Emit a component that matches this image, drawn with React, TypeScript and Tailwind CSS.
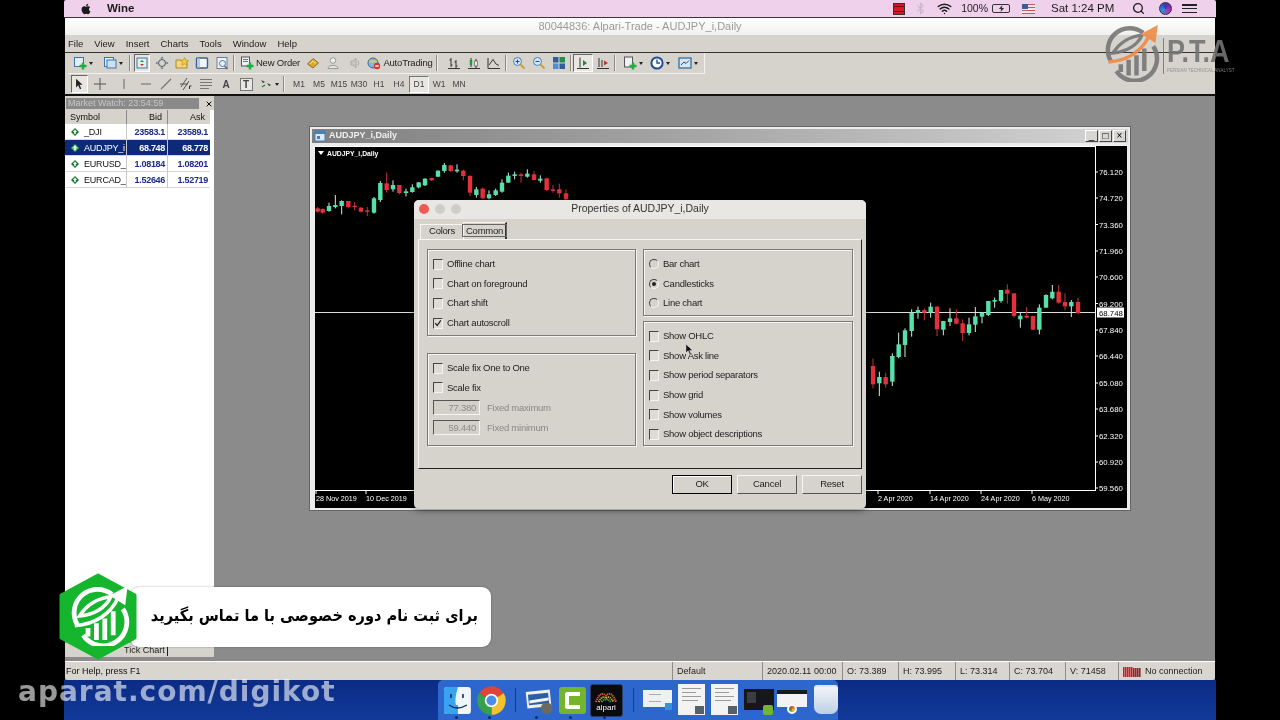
import { Search, Wifi, Bluetooth, X } from 'lucide-react';
import { FaApple } from 'react-icons/fa';
import type { ReactNode } from 'react';

// [x, wickTop, bodyTop, bodyBottom, wickBottom, up]
type Candle = [number, number, number, number, number, number];

// read off the reference at 3x, hence the offsets in toPage
const leftCandles: Candle[] = [
  [38,258,262,272,275,0],[53,262,264,275,278,0],[72,245,255,270,272,1],[91,222,252,258,262,1],[110,238,240,255,280,1],
  [130,240,240,258,262,0],[149,243,254,258,268,0],[168,258,260,272,275,0],[187,258,268,272,285,0],[207,228,232,275,278,1],
  [226,180,186,237,243,1],[245,155,187,207,215,0],[264,178,192,205,212,1],[283,192,192,216,220,0],[303,203,211,216,226,1],
  [322,190,199,213,215,1],[341,183,184,199,202,1],[360,172,173,193,195,1],[380,170,171,178,180,0],[399,148,149,167,168,1],
  [418,126,132,150,155,1],[437,132,133,150,153,0],[456,130,146,151,155,1],[475,146,149,165,178,0],[495,162,165,215,225,0],
  [514,198,205,222,230,1],[533,200,203,232,235,0],[552,208,220,232,235,1],[572,203,208,222,225,1],[591,175,185,212,215,1],
  [610,155,164,185,185,1],[629,152,160,165,175,1],[648,155,160,165,185,0],[667,145,158,167,170,1],[687,150,160,177,178,0],
  [706,163,173,179,185,1],[725,170,172,207,210,0],[744,192,205,208,215,0],[763,188,205,217,230,0],[783,205,217,235,240,0],
];

const rightCandles: Candle[] = [
  [39,712,735,790,802,0],[58,752,768,787,825,1],[77,755,768,790,800,0],[97,697,705,782,795,1],[116,635,670,708,712,1],
  [135,622,628,672,708,1],[155,565,575,630,647,1],[174,557,567,576,593,1],[193,562,567,575,598,0],[212,545,557,575,590,1],
  [231,555,557,625,645,0],[250,600,600,626,643,1],[270,562,592,603,615,1],[289,565,592,608,610,0],[308,595,607,636,660,0],
  [327,590,610,636,643,1],[346,558,586,611,633,1],[366,575,575,587,607,1],[385,540,540,582,585,1],[404,530,537,542,560,1],
  [423,507,507,540,545,1],[442,490,506,518,548,0],[462,517,517,585,590,0],[481,575,584,595,620,1],[500,558,584,590,592,0],
  [519,585,585,626,627,0],[538,550,560,626,640,1],[558,520,522,560,560,1],[577,492,512,532,535,1],[596,492,512,545,548,0],
  [615,517,543,556,568,0],[634,537,543,556,588,1],[654,530,543,577,578,0],
];

const priceLabels: [string, number][] = [
  ['76.120', 171], ['74.720', 197], ['73.360', 223.5], ['71.960', 250], ['70.600', 276], ['69.200', 302.5],
  ['67.840', 329], ['66.440', 355], ['65.080', 382], ['63.680', 408], ['62.320', 435], ['60.920', 461], ['59.560', 487],
];

const dateLabels: [string, number][] = [
  ['28 Nov 2019', 316], ['10 Dec 2019', 366], ['2 Apr 2020', 878], ['14 Apr 2020', 930], ['24 Apr 2020', 981], ['6 May 2020', 1032],
];

const watchRows = [
  { symbol: '_DJI', bid: '23583.1', ask: '23589.1' },
  { symbol: 'AUDJPY_i', bid: '68.748', ask: '68.778', selected: true },
  { symbol: 'EURUSD_i', bid: '1.08184', ask: '1.08201' },
  { symbol: 'EURCAD_i', bid: '1.52646', ask: '1.52719' },
];

function CandleMarks({ data, ox, oy }: { data: Candle[]; ox: number; oy: number }) {
  return (
    <>
      {data.map(([x, wt, bt, bb, wb, up]) => {
        const cx = ox + x / 3;
        const color = up ? '#58e0aa' : '#e2303c';
        return (
          <g key={x}>
            <line x1={cx} x2={cx} y1={oy + wt / 3} y2={oy + wb / 3} stroke={up ? '#cfeee2' : '#c23040'} strokeWidth="1" />
            <rect x={cx - 2.2} y={oy + bt / 3} width="4.4" height={Math.max(1.5, (bb - bt) / 3)} fill={color} />
          </g>
        );
      })}
    </>
  );
}

function ChartCanvas() {
  return (
    <svg viewBox="315 145 812 362" className="block w-[812px] h-[362px] bg-black">
      <line x1="315" x2="1095" y1="145.5" y2="145.5" stroke="#fff" />
      <line x1="1095.5" x2="1095.5" y1="145" y2="490" stroke="#fff" />
      <line x1="315" x2="1096" y1="489.5" y2="489.5" stroke="#fff" />
      <line x1="315" x2="1095" y1="311.5" y2="311.5" stroke="#ddd" />
      <CandleMarks data={leftCandles} ox={305} oy={120} />
      <CandleMarks data={rightCandles} ox={860} oy={120} />
      <path d="M318 150 h6 l-3 4 z" fill="#fff" />
      <text x="327" y="154.5" fill="#fff" fontSize="6.8" fontFamily="Liberation Sans" fontWeight="700">AUDJPY_i,Daily</text>
      {priceLabels.map(([label, y]) => (
        <g key={label}>
          <line x1="1095" x2="1098" y1={y} y2={y} stroke="#fff" />
          <text x="1099" y={y + 3} fill="#fff" fontSize="7.8" fontFamily="Liberation Sans">{label}</text>
        </g>
      ))}
      <rect x="1097" y="306.5" width="27" height="10" fill="#fff" />
      <text x="1099" y="314.5" fill="#000" fontSize="7.8" fontFamily="Liberation Sans">68.748</text>
      {dateLabels.map(([label, x]) => (
        <g key={label}>
          <line x1={x} x2={x} y1="489" y2="493" stroke="#fff" />
          <text x={x} y="499.5" fill="#fff" fontSize="7.2" fontFamily="Liberation Sans">{label}</text>
        </g>
      ))}
    </svg>
  );
}

function Check({ checked }: { checked?: boolean }) {
  return (
    <span className="relative block w-[10px] h-[11px] shrink-0 border-[1.5px] border-t-[#444] border-l-[#444] border-r-[#f4f4f4] border-b-[#f4f4f4] bg-[#dedbd5]">
      {checked && (
        <svg viewBox="0 0 10 10" className="absolute inset-0 w-full h-full">
          <path d="M1.5 4.5 L4 7.5 L8.5 1" fill="none" stroke="#222" strokeWidth="1.6" />
        </svg>
      )}
    </span>
  );
}

function Radio({ checked }: { checked?: boolean }) {
  return (
    <span className="flex items-center justify-center w-[10px] h-[10px] shrink-0 rounded-full border-[1.5px] border-t-[#444] border-l-[#444] border-r-[#f4f4f4] border-b-[#f4f4f4]">
      {checked && <span className="block w-[4px] h-[4px] rounded-full bg-[#222]" />}
    </span>
  );
}

function Option({ label, control }: { label: string; control: ReactNode }) {
  return (
    <div className="flex items-center gap-[4px] h-[19.6px] text-[#222]">
      {control}
      <span>{label}</span>
    </div>
  );
}

function GroupBox({ className, children }: { className: string; children: ReactNode }) {
  return (
    <div className={`border border-[#7c7a75] shadow-[1px_1px_0_#f5f5f2,inset_1px_1px_0_#f5f5f2] pl-[5px] pt-[5px] ${className}`}>
      {children}
    </div>
  );
}

function FixedField({ value, label }: { value: string; label: string }) {
  return (
    <div className="flex items-center gap-[7px] h-[20px] text-[#8a8884]">
      <span className="block w-[47px] h-[15px] text-right pr-[3px] leading-[13px] border border-t-[#555] border-l-[#555] border-r-[#f4f4f4] border-b-[#f4f4f4] text-[#8e8c88] bg-[#d3d0ca]">
        {value}
      </span>
      <span>{label}</span>
    </div>
  );
}

function DialogButton({ label, primary }: { label: string; primary?: boolean }) {
  return (
    <button
      className={`w-[60px] h-[19px] flex items-center justify-center text-[#222] ${
        primary
          ? 'border-[1.5px] border-black shadow-[inset_1px_1px_0_#fff]'
          : 'border border-t-[#f5f5f2] border-l-[#f5f5f2] border-r-[#55534f] border-b-[#55534f]'
      }`}
    >
      {label}
    </button>
  );
}

function PropertiesDialog() {
  return (
    <div className="absolute left-[199px] top-[104px] w-[452px] h-[309px] rounded-[5px] bg-[#d6d3cc] shadow-[0_1px_6px_rgba(0,0,0,0.5)] overflow-hidden text-[9.5px] tracking-[-0.25px] font-['Liberation_Sans',sans-serif]">
      <div className="relative flex items-center h-[19px] px-[5px] gap-[6px] bg-[#e9e7e4]">
        <span className="block w-[10px] h-[10px] rounded-full bg-[#ef5a52]" />
        <span className="block w-[10px] h-[10px] rounded-full bg-[#cfcdc9]" />
        <span className="block w-[10px] h-[10px] rounded-full bg-[#cfcdc9]" />
        <span className="absolute inset-x-0 top-0 text-center text-[10.5px] tracking-normal leading-[17px] text-[#333]">Properties of AUDJPY_i,Daily</span>
      </div>
      <div className="flex items-end h-[20px] pl-[6px] pt-[3px]">
        <span className="flex items-center justify-center w-[43px] h-[15px] text-[#222] border-t border-l border-[#f5f5f2]">Colors</span>
        <span className="flex items-center justify-center w-[44px] h-[17px] text-[#222] border-t border-l border-[#f5f5f2] border-r-2 border-r-[#333]">
          <span className="border border-[#666] px-[3px] leading-[11px]">Common</span>
        </span>
      </div>
      <div className="mx-[4px] h-[230px] border-t border-l border-t-[#f5f5f2] border-l-[#f5f5f2] border-r-[1.5px] border-b-[1.5px] border-r-[#222] border-b-[#222] pl-[8px] pt-[9px] grid grid-cols-[209px_210px] gap-x-[7px]">
        <div className="flex flex-col gap-[17px]">
          <GroupBox className="h-[87px]">
            <Option label="Offline chart" control={<Check />} />
            <Option label="Chart on foreground" control={<Check />} />
            <Option label="Chart shift" control={<Check />} />
            <Option label="Chart autoscroll" control={<Check checked />} />
          </GroupBox>
          <GroupBox className="h-[93px]">
            <Option label="Scale fix One to One" control={<Check />} />
            <Option label="Scale fix" control={<Check />} />
            <FixedField value="77.380" label="Fixed maximum" />
            <FixedField value="59.440" label="Fixed minimum" />
          </GroupBox>
        </div>
        <div className="flex flex-col gap-[5px]">
          <GroupBox className="h-[67px]">
            <Option label="Bar chart" control={<Radio />} />
            <Option label="Candlesticks" control={<Radio checked />} />
            <Option label="Line chart" control={<Radio />} />
          </GroupBox>
          <GroupBox className="h-[125px]">
            <Option label="Show OHLC" control={<Check />} />
            <Option label="Show Ask line" control={<Check />} />
            <Option label="Show period separators" control={<Check />} />
            <Option label="Show grid" control={<Check />} />
            <Option label="Show volumes" control={<Check />} />
            <Option label="Show object descriptions" control={<Check />} />
          </GroupBox>
        </div>
      </div>
      <div className="flex justify-end gap-[5px] pr-[4px] pt-[6px]">
        <DialogButton label="OK" primary />
        <DialogButton label="Cancel" />
        <DialogButton label="Reset" />
      </div>
      {/* mouse pointer over the Show OHLC row */}
      <svg viewBox="0 0 10 14" className="absolute left-[271px] top-[143px] w-[9px] h-[13px]">
        <path d="M1 1 L1 11 L3.5 8.5 L5.5 13 L7 12.4 L5.2 8 L8.6 8 Z" fill="#111" stroke="#eee" strokeWidth="0.6" />
      </svg>
    </div>
  );
}

function ChartWindow() {
  return (
    <div className="absolute left-[94px] top-[30px] w-[822px] h-[385px] bg-[#ececec] border border-[#666] font-['Liberation_Sans',sans-serif]">
      <div className="flex items-center h-[14px] mt-[2px] mx-[2px] pl-[2px] pr-[2px] bg-gradient-to-r from-[#808080] via-[#a8a8a8] to-[#d4d4d4]">
        <svg viewBox="0 0 12 12" className="w-[12px] h-[12px]">
          <rect x="1" y="1" width="10" height="10" fill="#dfe9f5" stroke="#4a7fb5" />
          <rect x="1" y="1" width="10" height="3" fill="#4a7fb5" />
          <rect x="3" y="6" width="3" height="3" fill="#4a7fb5" />
        </svg>
        <span className="ml-[3px] text-[9px] font-bold text-[#eef0f2] flex-1">AUDJPY_i,Daily</span>
        {['_', '□', '×'].map((glyph) => (
          <span
            key={glyph}
            className="flex items-center justify-center w-[13px] h-[12px] ml-[1px] bg-[#d8d6d0] border border-t-white border-l-white border-r-[#444] border-b-[#444] text-[10px] leading-none text-black"
          >
            {glyph}
          </span>
        ))}
      </div>
      <div className="ml-[5px] mt-[3px]">
        <ChartCanvas />
      </div>
    </div>
  );
}

function WatchIcon({ light }: { light?: boolean }) {
  return (
    <svg viewBox="0 0 10 10" className="w-[8px] h-[8px] shrink-0">
      <path d="M5 0 L10 5 L5 10 L0 5 Z" fill={light ? '#4fc06a' : '#157a30'} />
      <path d="M5 2 L7.5 5 H6 V7.5 H4 V5 H2.5 Z" fill="#fff" />
    </svg>
  );
}

function MarketWatch() {
  return (
    <div className="flex flex-col w-[149px] shrink-0 bg-white text-[9px] font-['Liberation_Sans',sans-serif]">
      <div className="flex items-center h-[14px] pt-[2px] pl-[1px] bg-[#d6d3cc]">
        <div className="w-[133px] h-[11px] leading-[11px] pl-[2px] text-[#c8c8c8] bg-[#8a8a8a]">Market Watch: 23:54:59</div>
        <X className="w-[8px] h-[8px] ml-[6px] text-black" strokeWidth={3} />
      </div>
      <div className="grid grid-cols-[61px_41px_42px] w-[145px] h-[14px] pl-[1px] bg-[#d6d3cc] text-[#111]">
        <span className="pl-[4px] border-r border-[#8a8a8a] leading-[14px]">Symbol</span>
        <span className="pr-[5px] text-right border-r border-[#8a8a8a] leading-[14px]">Bid</span>
        <span className="pr-[5px] text-right leading-[14px]">Ask</span>
      </div>
      {watchRows.map((row) => (
        <div
          key={row.symbol}
          className={`grid grid-cols-[61px_41px_42px] w-[145px] h-[16px] leading-[16px] pl-[1px] border-b border-[#d8d8d8] ${
            row.selected ? 'bg-[#0c2a78] text-white' : 'text-[#111]'
          }`}
        >
          <span className="flex items-center gap-[5px] pl-[5px] border-r border-[#c8c8c8] overflow-hidden whitespace-nowrap tracking-[-0.2px]">
            <WatchIcon light={row.selected} />
            {row.symbol}
          </span>
          <span className={`pr-[2px] text-right font-bold tracking-[-0.3px] border-r border-[#c8c8c8] ${row.selected ? '' : 'text-[#1c2b8c]'}`}>{row.bid}</span>
          <span className={`pr-[2px] text-right font-bold tracking-[-0.3px] ${row.selected ? '' : 'text-[#1c2b8c]'}`}>{row.ask}</span>
        </div>
      ))}
      <div className="flex-1" />
      <div className="flex items-start h-[15px] bg-[#d6d3cc] border-t border-[#aaa]">
        <span className="ml-[50px] mt-[1px] leading-[12px] pr-[2px] border-r border-[#222] text-[#222]">
          <span className="ml-[9px]">Tick Chart</span>
        </span>
      </div>
    </div>
  );
}

function Tool({ className = 'w-[20px]', pressed, children }: { className?: string; pressed?: boolean; children: ReactNode }) {
  return (
    <div
      className={`flex items-center justify-center gap-[2px] h-[18px] shrink-0 whitespace-nowrap text-[9.5px] tracking-[-0.2px] text-[#222] ${className} ${
        pressed ? 'bg-[#e8e6e1] border border-t-[#666] border-l-[#666] border-r-white border-b-white' : ''
      }`}
    >
      {children}
    </div>
  );
}

function Sep() {
  return <span className="block w-[2px] h-[16px] mx-[1px] shrink-0 border-l border-[#8a8883] bg-white/60" />;
}

function Caret() {
  return <span className="block w-0 h-0 border-x-[2.5px] border-x-transparent border-t-[3px] border-t-[#222]" />;
}

function Ico({ children }: { children: ReactNode }) {
  return (
    <svg viewBox="0 0 14 14" className="w-[14px] h-[14px] shrink-0" fill="none">
      {children}
    </svg>
  );
}

const GreenPlus = () => <path d="M10 6.5 v7 M6.5 10 h7" stroke="#1fae3a" strokeWidth="2.4" />;
const Page = () => <rect x="1.5" y="1.5" width="9" height="9" fill="#e3edf7" stroke="#3f76a8" />;
const BlackStroke = { stroke: '#333', strokeWidth: 1 };

function MainToolbar() {
  return (
    <div className="flex items-center h-[22px] pl-[3px] border-t border-[#333] bg-[#d6d3cc]">
      <div className="flex items-center h-[21px] pr-[2px] border-b-[1.5px] border-r-[1.5px] border-[#f2f2ef]">
        <Tool className="w-[30px]"><Ico><Page /><GreenPlus /></Ico><Caret /></Tool>
        <Tool className="w-[30px]"><Ico><Page /><rect x="4" y="4" width="9" height="8" fill="#cfe0f0" stroke="#3f76a8" /></Ico><Caret /></Tool>
        <Sep />
        <Tool pressed className="w-[16px] mx-[2px]"><Ico><rect x="2" y="2" width="10" height="10" fill="#dff0ea" stroke="#3f76a8" /><path d="M5 6 l2 -2 l2 2 z" fill="#1a9a3a" /><path d="M5 8 l2 2 l2 -2 z" fill="#c73030" /></Ico></Tool>
        <Tool><Ico><circle cx="7" cy="7" r="3.5" stroke="#555" /><path d="M7 0.5 l1.5 2 h-3 z M7 13.5 l1.5 -2 h-3 z M0.5 7 l2 -1.5 v3 z M13.5 7 l-2 -1.5 v3 z" fill="#3f76a8" /></Ico></Tool>
        <Tool><Ico><path d="M1 4 h5 l1 1 h5 v7 h-11 z" fill="#f2d77a" stroke="#a98a2e" /><path d="M9.5 1.5 l1.2 2.6 l2.8 .3 l-2 2 l.6 2.8 l-2.6 -1.4 l-2.6 1.4 l.6 -2.8 l-2 -2 l2.8 -.3 z" fill="#f5c93c" stroke="#a98a2e" strokeWidth=".6" /></Ico></Tool>
        <Tool><Ico><rect x="1.5" y="2" width="11" height="10" rx="1" fill="#f2f4f6" stroke="#3f5f86" strokeWidth="1.4" /><rect x="2" y="2.5" width="3" height="9" fill="#b9cbe0" /></Ico></Tool>
        <Tool><Ico><rect x="2" y="1.5" width="10" height="11" fill="#eef2f6" stroke="#6a7f98" /><circle cx="7.5" cy="7.5" r="3" stroke="#3f76a8" /><path d="M9.5 10 l3 3" stroke="#666" strokeWidth="1.4" /></Ico></Tool>
        <Sep />
        <Tool className="w-[64px] ml-[2px]"><Ico><rect x="1.5" y="1" width="8" height="9" fill="#eef2f6" stroke="#555" /><path d="M3 3.5 h5 M3 5.5 h5" stroke="#777" /><GreenPlus /></Ico><span>New Order</span></Tool>
        <Tool className="w-[20px] ml-[1px]"><Ico><path d="M1.5 8 L7 2.5 L12.5 7 L7 12 Z" fill="#d9a92c" stroke="#7a5d14" strokeWidth=".8" /><path d="M4 8 L7 5 L10 7.5" stroke="#f6e38a" /></Ico></Tool>
        <Tool><Ico><circle cx="7" cy="4.5" r="2.8" fill="#eef0f2" stroke="#999" /><path d="M2 12.5 c0 -4 10 -4 10 0 z" fill="#e6e8ea" stroke="#999" /></Ico></Tool>
        <Tool className="w-[20px] ml-[2px]"><Ico><path d="M3 5 h2 l3 -3 v10 l-3 -3 h-2 z" fill="#c9c7c2" stroke="#aaa" /><path d="M10 4.5 q1.5 2.5 0 5" stroke="#aaa" /></Ico></Tool>
        <Tool className="w-[70px]"><Ico><circle cx="6" cy="7" r="5" fill="#7eb6e6" stroke="#2f6aa0" /><path d="M2 4.5 h8 v2 h-8 z" fill="#f0c93c" /><circle cx="10" cy="10" r="3.2" fill="#d8362a" /><rect x="8.3" y="9.3" width="3.4" height="1.4" fill="#fff" /></Ico><span>AutoTrading</span></Tool>
        <Sep />
        <Tool className="w-[20px] ml-[5px]"><Ico><path d="M4 2 v9 M2.5 4 h1.5 M4 9 h1.5 M9 4 v8 M7.5 6 h1.5 M9 10 h1.5 M1 12.5 h12" {...BlackStroke} /></Ico></Tool>
        <Tool><Ico><path d="M4 2 v9 M9 3 v9 M1 12.5 h12" {...BlackStroke} /><rect x="2.8" y="4" width="2.4" height="5" fill="#1a9a3a" /><rect x="7.8" y="5" width="2.4" height="5" fill="#fff" stroke="#333" strokeWidth=".6" /></Ico></Tool>
        <Tool><Ico><path d="M1 2 v10.5 h12 M2 9 L6 3.5 L9 8 L12 9.5" {...BlackStroke} /></Ico></Tool>
        <Sep />
        <Tool className="w-[20px] ml-[1px]"><Ico><circle cx="5.5" cy="5.5" r="4" fill="#d5e6f6" stroke="#4a7fb5" /><path d="M3.5 5.5 h4 M5.5 3.5 v4" stroke="#1d4f86" /><path d="M8.5 8.5 l4 4" stroke="#c9a237" strokeWidth="2" /></Ico></Tool>
        <Tool><Ico><circle cx="5.5" cy="5.5" r="4" fill="#d5e6f6" stroke="#4a7fb5" /><path d="M3.5 5.5 h4" stroke="#1d4f86" /><path d="M8.5 8.5 l4 4" stroke="#c9a237" strokeWidth="2" /></Ico></Tool>
        <Tool><Ico><rect x="1" y="1" width="5.5" height="5.5" fill="#2f5f9a" /><rect x="7.5" y="1" width="5.5" height="5.5" fill="#2b8a4a" /><rect x="1" y="7.5" width="5.5" height="5.5" fill="#4f8fd0" /><rect x="7.5" y="7.5" width="5.5" height="5.5" fill="#2f5f9a" /></Ico></Tool>
        <Sep />
        <Tool pressed className="w-[20px]"><Ico><path d="M4 1.5 v10 M1 12.5 h12" {...BlackStroke} /><path d="M7 4 l4 3 l-4 3 z" fill="#1a8a3a" /></Ico></Tool>
        <Tool><Ico><path d="M3 2 v9 M6 4 v7 M1 12.5 h12" {...BlackStroke} /><path d="M8 4.5 l4 2.5 l-4 2.5 z" fill="#c73030" /></Ico></Tool>
        <Sep />
        <Tool className="w-[26px] ml-[3px]"><Ico><rect x="1.5" y="1" width="8" height="10" fill="#eef2f6" stroke="#555" /><GreenPlus /></Ico><Caret /></Tool>
        <Tool className="w-[28px]"><svg viewBox="0 0 14 14" className="w-[14px] h-[14px]" fill="none"><circle cx="7" cy="7" r="5.6" fill="#fff" stroke="#1f4f96" strokeWidth="2" /><path d="M7 3.5 V7 H10" stroke="#1f4f96" strokeWidth="1.4" /></svg><Caret /></Tool>
        <Tool className="w-[28px]"><Ico><rect x="1" y="2" width="12" height="10" fill="#d5e6f6" stroke="#3f76a8" strokeWidth="1.4" /><path d="M3 9 L6 6 L8 7.5 L11 4.5" stroke="#444" /></Ico><Caret /></Tool>
      </div>
    </div>
  );
}

function LineToolbar() {
  const periods = ['M1', 'M5', 'M15', 'M30', 'H1', 'H4', 'D1', 'W1', 'MN'];
  return (
    <div className="flex items-center h-[20px] pl-[6px] bg-[#d6d3cc] text-[#333]">
      <Tool pressed className="w-[17px]"><svg viewBox="0 0 10 14" className="w-[9px] h-[12px]"><path d="M1 1 L1 11 L3.5 8.5 L5.5 13 L7 12.4 L5.2 8 L8.6 8 Z" fill="#222" /></svg></Tool>
      <Tool className="w-[24px]"><Ico><path d="M7 1 v12 M1 7 h12" stroke="#555" /></Ico></Tool>
      <Tool className="w-[24px]"><Ico><path d="M7 2 v10" stroke="#777" strokeWidth="1.2" /></Ico></Tool>
      <Tool><Ico><path d="M2 7 h10" stroke="#777" strokeWidth="1.2" /></Ico></Tool>
      <Tool><Ico><path d="M2 12 L12 2" stroke="#777" strokeWidth="1.2" /></Ico></Tool>
      <Tool><Ico><path d="M2 10 L8 1 M4 13 L10 4 M1 7 L9 7" stroke="#555" /><path d="M10.5 12 v-3 h2" stroke="#333" /></Ico></Tool>
      <Tool><Ico><path d="M1 2.5 h12 M1 5.5 h12 M1 8.5 h12 M1 11.5 h9" stroke="#777" /></Ico></Tool>
      <Tool><span className="font-bold text-[10px] text-[#444]">A</span></Tool>
      <Tool><span className="flex items-center justify-center w-[13px] h-[13px] border border-[#777] text-[10px] font-bold text-[#444] bg-[#e8e6e1]">T</span></Tool>
      <Tool className="w-[26px]"><Ico><path d="M2 3 l4 2 -2 1 z M8 6 l4 2 -2 1 z" fill="#333" /><path d="M3 10 l3 -2" stroke="#1a8a3a" strokeWidth="1.4" /></Ico><Caret /></Tool>
      <Sep />
      <div className="flex items-center ml-[3px] font-['Liberation_Sans',sans-serif]">
        {periods.map((period) => (
          <span
            key={period}
            className={`flex items-center justify-center w-[20px] h-[17px] text-[8.5px] text-[#444] ${
              period === 'D1' ? 'bg-[#e8e6e1] border border-t-[#777] border-l-[#777] border-r-white border-b-white' : ''
            }`}
          >
            {period}
          </span>
        ))}
      </div>
    </div>
  );
}

function StatusCell({ className, children }: { className: string; children: ReactNode }) {
  return <div className={`flex items-center gap-[4px] pl-[4px] pt-[2px] h-full border-l border-[#8f8d88] shrink-0 whitespace-nowrap ${className}`}>{children}</div>;
}

function StatusBar() {
  return (
    <div className="flex items-center h-[19px] mt-[4px] border-t border-white bg-[#d9d6cf] rounded-b-[3px] text-[9px] text-[#222] font-['Liberation_Sans',sans-serif]">
      <div className="w-[607px] shrink-0 pl-[1px] pt-[2px] text-[#111]">For Help, press F1</div>
      <StatusCell className="w-[90px]">Default</StatusCell>
      <StatusCell className="w-[80px]">2020.02.11 00:00</StatusCell>
      <StatusCell className="w-[56px]">O: 73.389</StatusCell>
      <StatusCell className="w-[57px]">H: 73.995</StatusCell>
      <StatusCell className="w-[54px]">L: 73.314</StatusCell>
      <StatusCell className="w-[56px]">C: 73.704</StatusCell>
      <StatusCell className="w-[53px]">V: 71458</StatusCell>
      <StatusCell className="w-[90px]">
        <svg viewBox="0 0 18 10" className="w-[18px] h-[10px]">
          {[0, 2, 4, 6, 8, 10, 12, 14, 16].map((x) => (
            <rect key={x} x={x} y={x < 9 ? 0 : 1} width="1.6" height={x < 9 ? 10 : 9} fill={x < 9 ? '#c0262a' : '#8a2a2a'} />
          ))}
        </svg>
        <span>No connection</span>
      </StatusCell>
    </div>
  );
}

function MenuBar() {
  return (
    <div className="relative flex items-center h-[18px] pl-[16px] bg-[#f0d1ec] border-b border-[#3c3540] rounded-t-[2px] text-[11.5px] text-[#1b1b1b] font-['Liberation_Sans',sans-serif]">
      <FaApple className="w-[12px] h-[12px] text-[#1c1c1c]" />
      <span className="ml-[15px] font-bold">Wine</span>
      <div className="flex items-center ml-auto pr-[19px] whitespace-nowrap">
        <span className="flex flex-col justify-around w-[12px] h-[12px] bg-[#d9152a] border border-[#333]">
          <span className="h-px bg-[#7a0a18]" />
          <span className="h-px bg-[#7a0a18]" />
        </span>
        <Bluetooth className="w-[13px] h-[13px] ml-[9px] text-[#cbb5cb]" />
        <Wifi className="w-[15px] h-[15px] ml-[10px]" strokeWidth={2.4} />
        <span className="ml-[9px] text-[10.5px]">100%</span>
        <span className="flex items-center justify-center ml-[4px] w-[18px] h-[9px] border border-[#333] rounded-[2px]">
          <svg viewBox="0 0 8 8" className="w-[7px] h-[7px]"><path d="M5 0 L1 4.5 H3.5 L3 8 L7 3.5 H4.5 Z" fill="#333" /></svg>
        </span>
        <span className="relative block ml-[12px] w-[13px] h-[10px] bg-[repeating-linear-gradient(180deg,#c9585c_0,#c9585c_1.5px,#f3e6ee_1.5px,#f3e6ee_3px)]">
          <span className="absolute left-0 top-0 w-[6px] h-[5px] bg-[#3d5a9a]" />
        </span>
        <span className="ml-[16px] w-[62px] text-[11.5px]">Sat 1:24 PM</span>
        <Search className="w-[13px] h-[13px] ml-[19px]" strokeWidth={2.4} />
        <span className="block w-[13px] h-[13px] ml-[14px] rounded-full bg-[conic-gradient(#3a2fb0,#b12fb0,#2c8fe0,#3a2fb0)] border border-[#333]" />
        <span className="flex flex-col justify-between w-[15px] h-[9px] ml-[10px]">
          <span className="h-[1.5px] bg-[#222]" />
          <span className="h-[1.5px] bg-[#222]" />
          <span className="h-[1.5px] bg-[#222]" />
        </span>
      </div>
    </div>
  );
}

function GrowthMark({ ring, arrow, className }: { ring: string; arrow: string; className: string }) {
  return (
    <svg viewBox="0 0 100 100" className={className} fill="none">
      <path d="M12 64 A39 39 0 0 1 70 14" stroke={ring} strokeWidth="8" />
      <path d="M16 50 C30 28 50 20 68 18 C60 36 40 48 16 50 Z" stroke={ring} strokeWidth="6" />
      <path d="M88 38 A39 39 0 0 1 22 82" stroke={ring} strokeWidth="8" />
      <path d="M30 84 V70 M44 90 V62 M58 90 V54 M72 82 V42" stroke={ring} strokeWidth="8" />
      <path d="M8 66 C42 64 68 46 80 20" stroke={arrow} strokeWidth="6" />
      <path d="M66 16 L96 0 L92 32 Z" fill={arrow} />
    </svg>
  );
}

function PromoBanner() {
  return (
    <div className="absolute left-[59px] top-[573px] flex items-center">
      <div className="relative w-[78px] h-[87px] z-10 shrink-0">
        <svg viewBox="0 0 78 87" className="absolute inset-0 w-full h-full">
          <path d="M39 2 L76 22 V65 L39 85 L2 65 V22 Z" fill="#15b52d" stroke="#15b52d" strokeWidth="3" strokeLinejoin="round" />
        </svg>
        <GrowthMark ring="#ffffff" arrow="#ffffff" className="absolute left-[11px] top-[13px] w-[60px] h-[60px]" />
      </div>
      <div className="flex items-center justify-end w-[361px] h-[60px] -ml-[7px] pr-[13px] rounded-[9px] bg-white shadow-[0_0_2px_rgba(0,0,0,0.4)]">
        <span dir="rtl" className="font-['DejaVu_Sans_Condensed','DejaVu_Sans',sans-serif] font-bold text-[16.2px] text-black whitespace-nowrap">
          برای ثبت نام دوره خصوصی با ما تماس بگیرید
        </span>
      </div>
    </div>
  );
}

function LogoOverlay() {
  return (
    <div className="absolute left-[1104px] top-[24px] flex items-start pointer-events-none opacity-90">
      <GrowthMark ring="#777777" arrow="#ee8a45" className="w-[56px] h-[58px] shrink-0" />
      <div className="ml-[3px] mt-[14px] pl-[3px] border-l border-[#777] h-[36px] font-['Liberation_Sans',sans-serif]">
        <div className="text-[27px] leading-[24px] font-bold text-[#737373] origin-top scale-y-[1.15]">P.T.A</div>
        <div className="mt-[5px] text-[4.5px] leading-[7px] text-[#8a8a8a] whitespace-nowrap">PERSIAN TECHNICAL ANALYST</div>
      </div>
    </div>
  );
}

function Dock() {
  return (
    <div className="flex justify-end items-start flex-1 pr-[378px] bg-gradient-to-b from-[#0b2b85] to-[#123a9a]">
      <div className="flex items-center w-[400px] h-[40px] pl-[5px] rounded-t-[5px] bg-[#2d66cc] relative">
        <svg viewBox="0 0 27 27" className="w-[27px] h-[27px] ml-[1px]">
          <rect width="27" height="27" rx="3" fill="#f0f5fb" />
          <path d="M0 3 a3 3 0 0 1 3 -3 H14 Q10 14 12 18 H14 V27 H3 a3 3 0 0 1 -3 -3 Z" fill="#38a4f0" />
          <path d="M7 7 v4 M19 7 v4" stroke="#1a2a50" strokeWidth="1.6" />
          <path d="M5 18 Q13 24 23 18" fill="none" stroke="#1a2a50" strokeWidth="1.4" />
        </svg>
        <svg viewBox="0 0 28 28" className="w-[29px] h-[29px] ml-[6px]">
          <path d="M14 14 L2 7 A14 14 0 0 1 26 7 Z" fill="#de4437" />
          <path d="M14 14 L26 7 A14 14 0 0 1 14 28 Z" fill="#f5c12c" />
          <path d="M14 14 L14 28 A14 14 0 0 1 2 7 Z" fill="#37a04a" />
          <circle cx="14" cy="14" r="6.5" fill="#fff" />
          <circle cx="14" cy="14" r="4.8" fill="#4a8de8" />
        </svg>
        <span className="block w-px h-[24px] ml-[9px] bg-[#153c88]" />
        <svg viewBox="0 0 30 28" className="w-[30px] h-[27px] ml-[9px]">
          <rect x="1" y="4" width="25" height="17" fill="#f2efe6" transform="rotate(-6 13 12)" />
          <rect x="3" y="7" width="21" height="11" fill="#2a5fa8" transform="rotate(-6 13 12)" />
          <path d="M4 14 L24 11 V14 L4 17 Z" fill="#f3f3f3" />
          <circle cx="22" cy="22" r="6" fill="#6a6a62" />
        </svg>
        <span className="flex items-center justify-center w-[27px] h-[27px] ml-[4px] rounded-[3px] bg-[#74b52c]">
          <span className="block w-[15px] h-[17px] border-[4px] border-r-0 border-white rounded-l-[3px]" />
        </span>
        <span className="flex flex-col items-center justify-end w-[33px] h-[33px] ml-[4px] pb-[3px] rounded-[3px] bg-[#0b0b0f] border border-[#2a3e6a]">
          <svg viewBox="0 0 24 14" className="w-[22px] h-[13px]">
            <path d="M1 13 Q6 0 12 6 Q18 0 23 13" fill="none" stroke="#e8622c" strokeWidth="2" strokeDasharray="1.4 .8" />
            <path d="M4 13 Q8 5 12 9 Q16 5 20 13" fill="none" stroke="#cbbf2c" strokeWidth="2" strokeDasharray="1.4 .8" />
            <path d="M7 13 Q10 9 12 11 Q14 9 17 13" fill="none" stroke="#48b04a" strokeWidth="2" strokeDasharray="1.4 .8" />
          </svg>
          <span className="text-[8px] leading-[10px] text-white font-['Liberation_Sans',sans-serif]">alpari</span>
        </span>
        <span className="block w-px h-[24px] ml-[10px] bg-[#153c88]" />
        <span className="relative block w-[30px] h-[17px] ml-[9px] mb-[4px] bg-[#eef0f2]">
          <span className="absolute left-[6px] top-[4px] w-[12px] h-[8px] border-t border-b border-[#aab]" />
          <span className="absolute right-0 bottom-[-3px] w-[7px] h-[7px] bg-[#3a8fe0]" />
        </span>
        {[0, 1].map((page) => (
          <span key={page} className="relative flex flex-col gap-[3px] w-[27px] h-[31px] ml-[6px] mb-[2px] p-[4px] bg-[#f3f3f3]">
            <span className="h-px bg-[#9a9a9a]" />
            <span className="h-px w-[14px] bg-[#9a9a9a]" />
            <span className="h-px bg-[#9a9a9a]" />
            <span className="h-px w-[16px] bg-[#9a9a9a]" />
            <span className="absolute right-[1px] bottom-[1px] w-[9px] h-[8px] bg-[#55606a]" />
          </span>
        ))}
        <span className="relative block w-[30px] h-[21px] ml-[6px] mb-[2px] bg-[#15171c]">
          <span className="absolute left-[3px] top-[3px] w-[9px] h-[11px] bg-[#3a3d44]" />
          <span className="absolute right-[1px] bottom-[-5px] w-[10px] h-[10px] rounded-[2px] bg-[#74b52c]" />
        </span>
        <span className="relative block w-[30px] h-[17px] ml-[3px] mb-[3px] bg-[#f3f3f3] border-t-[4px] border-[#1a1a1a]">
          <span className="absolute left-[10px] bottom-[-7px] w-[10px] h-[10px] rounded-full bg-[conic-gradient(#de4437,#f5c12c,#37a04a,#de4437)] border-[2px] border-white" />
        </span>
        <span className="block w-[24px] h-[29px] ml-[7px] mb-[1px] rounded-b-[7px] rounded-t-[3px] bg-gradient-to-b from-[#f2f5f8] to-[#bcd0e4] border-t-2 border-[#dfe7ee]" />
        {/* running indicators */}
        <span className="absolute left-[17px] bottom-[1px] w-[3px] h-[3px] rounded-full bg-[#0d2a66]" />
        <span className="absolute left-[50px] bottom-[1px] w-[3px] h-[3px] rounded-full bg-[#0d2a66]" />
        <span className="absolute left-[97px] bottom-[1px] w-[3px] h-[3px] rounded-full bg-[#0d2a66]" />
        <span className="absolute left-[131px] bottom-[1px] w-[3px] h-[3px] rounded-full bg-[#0d2a66]" />
        <span className="absolute left-[165px] bottom-[1px] w-[3px] h-[3px] rounded-full bg-[#0d2a66]" />
      </div>
    </div>
  );
}

export default function App() {
  return (
    <div className="relative flex justify-center w-[1280px] h-[720px] overflow-hidden bg-black blur-[0.4px] font-['Liberation_Sans',sans-serif]">
      <div className="flex flex-col w-[1152px] h-[720px]">
        <MenuBar />
        <div className="flex-1 flex flex-col min-h-0 mx-[1px] bg-[#8b8b8b]">
          <div className="flex items-center justify-center h-[17px] bg-gradient-to-b from-white to-[#f0f0ee] text-[11px] text-[#9a9a9a]">
            80044836: Alpari-Trade - AUDJPY_i,Daily
          </div>
          <div className="flex items-center gap-[11px] h-[17px] pl-[3px] pt-[1px] bg-[#d6d3cc] text-[9.5px] text-[#222]">
            {['File', 'View', 'Insert', 'Charts', 'Tools', 'Window', 'Help'].map((item) => (
              <span key={item}>{item}</span>
            ))}
          </div>
          <MainToolbar />
          <LineToolbar />
          <div className="h-[1.5px] bg-[#111]" />
          <div className="flex flex-1 min-h-0">
            <MarketWatch />
            <div className="relative flex-1 ml-[1px] bg-[#8b8b8b]">
              <ChartWindow />
              <PropertiesDialog />
            </div>
          </div>
          <StatusBar />
        </div>
        <div className="flex h-[40px] shrink-0">
          <Dock />
        </div>
      </div>
      <PromoBanner />
      <LogoOverlay />
      <div className="absolute left-[18px] top-[677px] text-[28px] leading-[30px] font-bold tracking-[1px] text-white/60 font-['DejaVu_Sans',sans-serif]">
        aparat.com/digikot
      </div>
    </div>
  );
}
